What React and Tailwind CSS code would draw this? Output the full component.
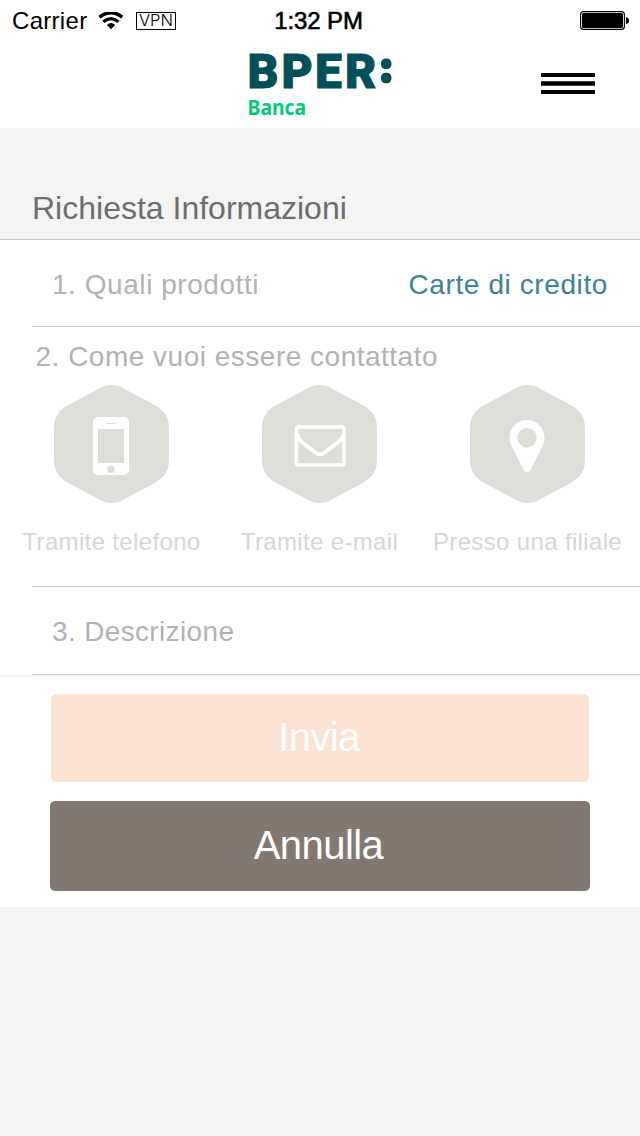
import React from 'react';

function StatusBar() {
  return (
    <div className="grid h-10 grid-cols-3 items-center pr-[11px] pl-3 text-black">
      <div className="flex items-center">
        <span className="w-[86px] pt-px text-[24px] leading-10 tracking-[0.3px]">Carrier</span>
        <svg className="h-[18px] w-[26px]" viewBox="0 0 26 18" fill="none" stroke="#000">
          <path d="M1.4 5.2 Q13 -3.6 24.2 5.2" strokeWidth="3.5" />
          <path d="M5.3 9.8 Q13 3.5 20.5 9.8" strokeWidth="3.3" />
          <path d="M13 17.2 L8.8 13 Q13 9.1 17.2 13 Z" fill="#000" stroke="none" />
        </svg>
        <div className="ml-3 flex h-[18px] w-10 items-center justify-center border border-black font-['Inter',sans-serif] text-[16.5px] leading-none font-light text-black">
          VPN
        </div>
      </div>
      <span className="pt-px pr-1 text-center text-[24px] leading-10 tracking-[-0.1px] [-webkit-text-stroke:0.6px_#000]">1:32 PM</span>
      <svg className="h-[19px] w-[49px] justify-self-end" viewBox="0 0 49 19">
        <rect x="0.6" y="0.6" width="43.8" height="17.8" rx="3" fill="#fff" stroke="#000" strokeWidth="1.1" />
        <rect x="2" y="2" width="41" height="15" rx="1.6" />
        <path d="M46 6 Q49 6.5 49 9.5 T46 13 Z" />
      </svg>
    </div>
  );
}

function Logo() {
  return (
    <svg className="h-[66px] w-[148px] overflow-visible" viewBox="246 51 148 66">
      <text x="247.4 281.4 315 345" y="87.8" fontSize="48" fontWeight="900" fontFamily="Roboto, sans-serif" fill="#00505a" stroke="#00505a" strokeWidth="1">BPER</text>
      <text x="247.6" y="115" fontSize="20.6" fontWeight="700" fontFamily="'Noto Sans', sans-serif" fill="#0c7" textLength="58.6" lengthAdjust="spacingAndGlyphs">Banca</text>
      <g fill="#00505a">
        <rect x="381" y="58.6" width="10.4" height="10.4" rx="4.4" />
        <rect x="381" y="72.8" width="10.4" height="10.4" rx="4.4" />
      </g>
    </svg>
  );
}

function Hexagon({ children }) {
  return (
    <svg className="h-[118px] w-[115px]" viewBox="0 0 115 118">
      <path
        d="M0 42 C0 33 5 25.3 13 20.8 L44 4.2 C52.5 -1.4 62.5 -1.4 71 4.2 L102 20.8 C110 25.3 115 33 115 42 V76 C115 85 110 92.7 102 97.2 L71 113.8 C62.5 119.4 52.5 119.4 44 113.8 L13 97.2 C5 92.7 0 85 0 76 Z"
        fill="#deded9"
      />
      {children}
    </svg>
  );
}

function PhoneIcon() {
  return (
    <g>
      <rect x="39" y="32" width="36" height="58" rx="5" fill="#fff" />
      <rect x="44" y="44" width="26" height="34" rx="0.8" fill="#deded9" />
      <path d="M52.5 38.5 H61.5" stroke="#deded9" strokeWidth="1.2" />
      <circle cx="57" cy="84.2" r="3.7" fill="#deded9" />
    </g>
  );
}

function MailIcon() {
  return (
    <g fill="none" stroke="#fff">
      <rect x="34.5" y="42" width="47.5" height="38" rx="2" strokeWidth="3.5" />
      <path d="M35 49 C36 53.5 38 55.5 41 58 L53 67.3 Q58 71.3 63 67.3 L75 58 C79 55 81 53 82 49" strokeWidth="3.8" />
      <path d="M34.5 49 V55 L38 56 Z M82 49 V55 L79 56 Z" strokeWidth="1" fill="#fff" />
    </g>
  );
}

function PinIcon() {
  return (
    <g>
      <path d="M57 35 C67 35 74.5 43 74.5 52.5 C74.5 56 73.5 59 72 62 L61 84 Q59.8 87 57 87 T53 84 L42 62 C40.5 59 39.5 56 39.5 52.5 C39.5 43 47 35 57 35 Z" fill="#fff" />
      <circle cx="57" cy="52.7" r="9.7" fill="#deded9" />
    </g>
  );
}

function ContactOption({ label, children }) {
  return (
    <button className="flex w-[208px] shrink-0 flex-col items-center">
      <Hexagon>{children}</Hexagon>
      <span className="mt-[25px] text-[24px] leading-7 tracking-[0.35px] whitespace-nowrap text-[#d6d6d3]">{label}</span>
    </button>
  );
}

export default function App() {
  return (
    <div className="min-h-[1136px] w-[640px] overflow-hidden bg-[#f4f4f2] font-['Liberation_Sans',Arial,sans-serif]">
      <header className="h-32 bg-white">
        <StatusBar />
        <div className="grid h-[88px] grid-cols-3 px-[45px] pt-[11px]">
          <span />
          <div className="flex justify-center">
            <Logo />
          </div>
          <button className="-mr-[0.5px] mt-[22px] h-[21px] w-[54px] justify-self-end" aria-label="Menu">
            <svg className="h-[21px] w-[54px]" viewBox="0 0 54 21">
              <path d="M0 0H54V4H0Z M0 8.3H54V12.7H0Z M0 17H54V21H0Z" />
            </svg>
          </button>
        </div>
      </header>

      <h1 className="h-28 border-b border-[#c7c7c9] pt-[60px] pl-8 text-[32px] leading-10 text-[#6d6d72]">
        Richiesta Informazioni
      </h1>

      <main className="text-[28px] text-[#b2b2b2]">
        <section className="bg-white pl-8">
          <div className="flex h-[87px] items-center justify-between border-b border-[#c8c7cc] pt-1 pr-8 pl-5">
            <span className="tracking-[0.55px]">1. Quali prodotti</span>
            <span className="tracking-[0.6px] text-[#42809a]">Carte di credito</span>
          </div>
        </section>
        <section className="h-[259px] bg-white">
          <h2 className="h-[58px] pt-2.5 pl-[35.5px] leading-10 tracking-[0.5px]">2. Come vuoi essere contattato</h2>
          <div className="flex pl-[7.5px]">
            <ContactOption label="Tramite telefono"><PhoneIcon /></ContactOption>
            <ContactOption label="Tramite e-mail"><MailIcon /></ContactOption>
            <ContactOption label="Presso una filiale"><PinIcon /></ContactOption>
          </div>
        </section>
        <section className="bg-white pl-8">
          <div className="flex h-[89px] items-center border-y border-[#c8c7cc] pt-0.5 pl-5 tracking-[0.35px]">3. Descrizione</div>
        </section>
      </main>

      <div className="mt-0.5 flex h-[230px] flex-col items-center bg-white pt-[17px] text-[40px] text-white">
        <button className="h-[88px] w-[538px] rounded-[5px] bg-[#fbe2d3] pr-0.5 pb-0.5 tracking-[-0.6px]">Invia</button>
        <button className="mt-[19px] h-[90px] w-[540px] rounded-[5px] bg-[#83786f] pr-[3px] pb-0.5 tracking-[-0.55px]">Annulla</button>
      </div>
    </div>
  );
}
